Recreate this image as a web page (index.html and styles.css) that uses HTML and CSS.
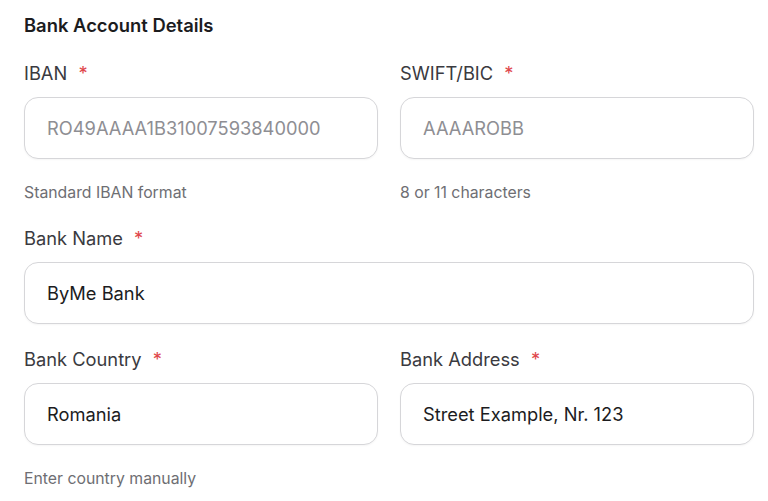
FILE: index.html
```html
<!DOCTYPE html>
<html lang="en">
<head>
  <meta charset="UTF-8">
  <title>Bank Account Details</title>
  <link rel="stylesheet" href="styles.css">
</head>
<body>

<h2 class="section-title">Bank Account Details</h2>

<div class="form-grid">
  <div class="field">
    <label>IBAN <span class="req">*</span></label>
    <input type="text" placeholder="RO49AAAA1B31007593840000">
    <div class="hint">Standard IBAN format</div>
  </div>
  <div class="field">
    <label>SWIFT/BIC <span class="req">*</span></label>
    <input type="text" placeholder="AAAAROBB">
    <div class="hint">8 or 11 characters</div>
  </div>

  <div class="field full">
    <label>Bank Name <span class="req">*</span></label>
    <input type="text" value="ByMe Bank">
  </div>

  <div class="field">
    <label>Bank Country <span class="req">*</span></label>
    <input type="text" value="Romania">
    <div class="hint">Enter country manually</div>
  </div>
  <div class="field">
    <label>Bank Address <span class="req">*</span></label>
    <input type="text" value="Street Example, Nr. 123">
  </div>
</div>

</body>
</html>
```

FILE: styles.css
```css
body {
  font-family: Inter, "Noto Sans", sans-serif;
  background-color: #ffffff;
  margin: 0;
  padding: 13px 14px 0 24px;
}
.section-title {
  font-size: 18.4px;
  font-weight: 600;
  line-height: 24px;
  color: #1c1c1e;
  margin: 0 0 24px 0;
}
.form-grid {
  display: grid;
  grid-template-columns: 1fr 1fr;
  column-gap: 22px;
}
.field {
  margin-bottom: 23px;
}
.field.full {
  grid-column: 1 / 3;
}
label {
  display: block;
  font-size: 18.3px;
  line-height: 24px;
  color: #3a3a40;
  margin-bottom: 12px;
}
.req {
  color: #e0474c;
  margin-left: 6px;
}
input {
  display: block;
  box-sizing: border-box;
  width: 100%;
  height: 62px;
  padding: 0 22px;
  font-family: inherit;
  font-size: 18.3px;
  color: #1c1c1e;
  background: #ffffff;
  border: 1px solid #d6d6d9;
  border-radius: 14px;
  box-shadow: 0 1px 2px rgba(0,0,0,0.04);
  outline: none;
}
input::placeholder {
  color: #8e8e93;
}
.hint {
  font-size: 15.8px;
  line-height: 20px;
  color: #6e6e73;
  margin-top: 24px;
}
```
